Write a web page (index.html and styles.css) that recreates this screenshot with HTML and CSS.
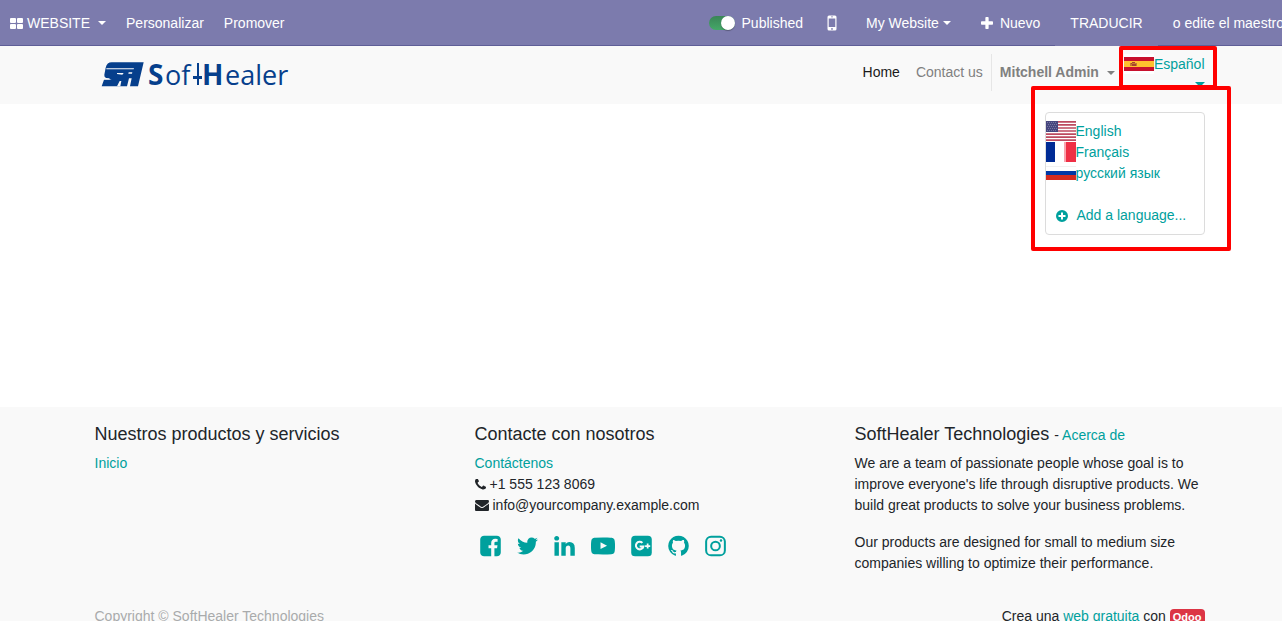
FILE: index.html
```html
<!DOCTYPE html>
<html lang="es">
<head>
<meta charset="utf-8">
<title>Home | SoftHealer Technologies</title>
<link rel="stylesheet" href="styles.css">
</head>
<body>
<div class="page">
  <header class="topbar">
    <nav class="topbar-group">
      <button class="topbar-item topbar-apps" type="button">
        <svg class="icon-grid" viewBox="0 0 13 11" aria-hidden="true"><rect width="6" height="5" rx="1"/><rect x="7" width="6" height="5" rx="1"/><rect y="6" width="6" height="5" rx="1"/><rect x="7" y="6" width="6" height="5" rx="1"/></svg>
        <span>WEBSITE</span><span class="caret caret-spaced"></span>
      </button>
      <a class="topbar-item topbar-menu" href="#">Personalizar</a>
      <a class="topbar-item topbar-menu" href="#">Promover</a>
    </nav>
    <div class="topbar-group topbar-right">
      <label class="topbar-item topbar-publish"><input class="switch" type="checkbox" checked><span>Published</span></label>
      <button class="topbar-item topbar-mobile" type="button" aria-label="Mobile preview">
        <svg class="icon-mobile" viewBox="0 0 10 16" aria-hidden="true"><path fill-rule="evenodd" d="M2 .5h6A1.5 1.5 0 0 1 9.500 2v12A1.500 1.500 0 0 1 8 15.500H2A1.500 1.500 0 0 1 .5 14V2A1.500 1.500 0 0 1 2 .5zM1.700 3.500v8.500h6.600V3.500zM4 1.600v.6h2v-.6zM5 13a.9.9 0 1 0 0 1.800.9.9 0 0 0 0-1.800z"/></svg>
      </button>
      <button class="topbar-item topbar-site" type="button"><span>My Website</span><span class="caret"></span></button>
      <button class="topbar-item topbar-new" type="button">
        <svg class="icon-plus" viewBox="192 128 1408 1408" aria-hidden="true"><path d="M1600 736v192q0 40-28 68t-68 28h-416v416q0 40-28 68t-68 28h-192q-40 0-68-28t-28-68v-416h-416q-40 0-68-28t-28-68v-192q0-40 28-68t68-28h416v-416q0-40 28-68t68-28h192q40 0 68 28t28 68v416h416q40 0 68 28t28 68z"/></svg>
        <span>Nuevo</span>
      </button>
      <button class="topbar-item topbar-translate" type="button">TRADUCIR</button>
      <a class="topbar-item" href="#">o edite el maestro</a>
    </div>
  </header>

  <div class="navbar">
    <div class="container navbar-inner">
      <a class="logo" href="#" aria-label="SoftHealer">
        <svg class="logo-image" viewBox="0 0 200 38" aria-hidden="true">
          <g transform="translate(0 1) scale(.33333)">
            <path d="M50 22H146L129 94H105L110 70H102L96 94H20L27 74H50L32 68Q27 65 28 59L32 38Q36 22 50 22z"/>
            <path class="logo-cut" d="M34 40H117L116 43H34zM66 54H86L82 59L66 57zM22 70H44L43 73H21zM74 78L79 78L76 94H66zM101 52H112L111 56H100z"/>
          </g>
          <text class="logo-bold" x="53" y="31">S</text>
          <text class="logo-light" x="70" y="31">of</text>
          <path d="M102 9h2v22h-2zM98 22h9v3h-9z"/>
          <text class="logo-bold" x="107" y="31">H</text>
          <text class="logo-light" x="130" y="31">ealer</text>
        </svg>
      </a>
      <nav class="nav-links">
        <a class="nav-link nav-active" href="#">Home</a>
        <a class="nav-link" href="#">Contact us</a>
        <button class="nav-link nav-user" type="button"><span>Mitchell Admin</span><span class="caret caret-spaced"></span></button>
        <div class="language">
          <button class="language-toggle" type="button">
            <span class="language-current"><svg class="flag" viewBox="0 0 30 20" aria-hidden="true"><path fill="#fff" d="M0 0h30v20H0z"/><path fill="#c8102e" d="M0 3h30v14H0z"/><path fill="#ffc02e" d="M0 7h30v6H0z"/><path fill="#c77a2e" d="M6 9h7v3H6z"/><path fill="#a5452c" d="M8 8h3v1H8zM7 9h1v1H7zM8 10h4v2H8z"/></svg><span>Español</span></span>
            <span class="caret"></span>
          </button>
          <div class="language-menu">
            <a href="#"><svg class="flag" viewBox="0 0 30 20" aria-hidden="true"><path fill="#fff" d="M0 0h30v20H0z"/><path stroke="#bd4a60" stroke-width="1.700" d="M0 .8h30M0 3.900h30M0 7h30M0 10h30M0 13.100h30M0 16.200h30M0 19.200h30"/><path fill="#46467f" d="M0 0h12v11H0z"/><path stroke="#77779f" stroke-dasharray="1 1" d="M1 1.500h10M2 3.500h10M1 5.500h10M2 7.500h10M1 9.500h10"/></svg><span>English</span></a>
            <a href="#"><svg class="flag" viewBox="0 0 30 20" aria-hidden="true"><path fill="#fff" d="M0 0h30v20H0z"/><path fill="#002b95" d="M0 0h9v20H0z"/><path fill="#f9a4ae" d="M18 0h2v20h-2z"/><path fill="#ef2f45" d="M20 0h10v20H20z"/></svg><span>Français</span></a>
            <a href="#"><svg class="flag" viewBox="0 0 30 20" aria-hidden="true"><path fill="#f1f1f1" d="M0 3h30v1H0z"/><path fill="#fff" d="M0 4h30v4H0z"/><path fill="#0039a6" d="M0 8h30v4H0z"/><path fill="#d52b1e" d="M0 12h30v5H0z"/></svg><span>русский язык</span></a>
            <a class="language-add" href="#"><svg class="icon-add" viewBox="0 0 12 12" aria-hidden="true"><path fill-rule="evenodd" d="M6 0a6 6 0 1 1 0 12A6 6 0 0 1 6 0zM5 2.500V5H2.500v2H5v2.500h2V7h2.500V5H7V2.500z"/></svg><span>Add a language...</span></a>
          </div>
          <div class="mark mark-toggle"></div>
          <div class="mark mark-menu"></div>
        </div>
      </nav>
    </div>
  </div>

  <main class="content"></main>

  <footer class="footer">
    <div class="container footer-columns">
      <section>
        <h4>Nuestros productos y servicios</h4>
        <a href="#">Inicio</a>
      </section>
      <section>
        <h4>Contacte con nosotros</h4>
        <ul class="contact">
          <li><a href="#">Contáctenos</a></li>
          <li><svg class="icon-phone" viewBox="192 192 1408 1408" aria-hidden="true"><path d="M1600 1240q0 27-10 70.500t-21 68.500q-21 50-122 106-94 51-186 51-27 0-52.500-3.500t-57.500-12.500-47.500-14.500-55.500-20.500-49-18q-98-35-175-83-128-79-264.500-215.500t-215.500-264.500q-48-77-83-175-3-9-18-49t-20.500-55.500-14.500-47.500-12.500-57.500-3.500-52.500q0-92 51-186 56-101 106-122 25-11 68.500-21t70.500-10q14 0 21 3 18 6 53 76 11 19 30 54t35 63.500 31 53.500q3 4 17.500 25t21.500 35.500 7 28.500q0 20-28.500 50t-62 55-62 53-28.500 46q0 9 5 22.500t8.500 20.500 14 24 11.500 19q76 137 174 235t235 174q2 1 19 11.500t24 14 20.500 8.500 22.500 5q18 0 46-28.500t53-62 55-62 50-28.500q14 0 28.500 7t35.500 21.500 25 17.500q25 15 53.500 31t63.500 35 54 30q70 35 76 53 3 7 3 21z"/></svg><span>+1 555 123 8069</span></li>
          <li><svg class="icon-envelope" viewBox="0 256 1792 1408" aria-hidden="true"><path d="M1792 710v794q0 66-47 113t-113 47h-1472q-66 0-113-47t-47-113v-794q44 49 101 87 362 246 497 345 57 42 92.500 65.500t94.500 48 110 24.500h2q51 0 110-24.500t94.500-48 92.500-65.500q170-123 498-345 57-39 100-87zm0-294q0 79-49 151t-122 123q-376 261-468 325-10 7-42.500 31t-54 38.500-52 32.500-57.500 27-50 9h-2q-23 0-50-9t-57.500-27-52-32.500-54-38.500-42.500-31q-91-64-262-182.500t-205-142.500q-62-42-117-115.500t-55-136.500q0-78 41.500-130t118.500-52h1472q65 0 112.500 47t47.500 113z"/></svg><span>info@yourcompany.example.com</span></li>
        </ul>
        <div class="social">
          <a href="#" aria-label="Facebook"><svg viewBox="128 0 1536 1792"><path d="M1376 128q119 0 203.500 84.500t84.500 203.500v960q0 119-84.500 203.500t-203.500 84.500h-188v-595h199l30-232h-229v-148q0-56 23.500-84t91.500-28l122-1v-207q-63-9-178-9-136 0-217.500 80t-81.500 226v171h-200v232h200v595h-532q-119 0-203.500-84.500t-84.500-203.500v-960q0-119 84.500-203.500t203.500-84.500h960z"/></svg></a>
          <a href="#" aria-label="Twitter"><svg viewBox="108 0 1576 1792"><path d="M1684 408q-67 98-162 167 1 14 1 42 0 130-38 259.500t-115.500 248.500-184.500 210.500-258 146-323 54.500q-271 0-496-145 35 4 78 4 225 0 401-138-105-2-188-64.500t-114-159.500q33 5 61 5 43 0 85-11-112-23-185.500-111.500t-73.500-205.500v-4q68 38 146 41-66-44-105-115t-39-154q0-88 44-163 121 149 294.500 238.500t371.500 99.500q-8-38-8-74 0-134 94.500-228.500t228.500-94.500q140 0 236 102 109-21 205-78-37 115-142 178 93-10 186-50z"/></svg></a>
          <a href="#" aria-label="LinkedIn"><svg viewBox="128 0 1536 1792"><path d="M477 625v991h-330v-991h330zm21-306q1 73-50.500 122t-135.500 49h-2q-82 0-132-49t-50-122q0-74 51.500-122.500t134.500-48.500 133 48.500 51 122.500zm1166 729v568h-329v-530q0-105-40.500-164.500t-126.500-59.500q-63 0-105.500 34.500t-63.500 85.500q-11 30-11 81v553h-329q2-399 2-647t-1-296l-1-48h329v144h-2q20-32 41-56t56.500-52 87-43.500 114.500-15.500q171 0 275 113.500t104 332.500z"/></svg></a>
          <a href="#" aria-label="YouTube"><svg class="social-wide" viewBox="0 0 1792 1792"><path d="M711 1128l484-250-484-253v503zm185-862q168 0 324.500 4.500t229.500 9.500l73 4q1 0 17 1.500t23 3 23.500 4.500 28.500 8 28 13 31 19.500 29 26.500q6 6 15.500 18.500t29 58.500 26.500 101q8 64 12.500 136.500t5.500 113.500v176q1 145-18 290-7 55-25 99.500t-32 61.500l-14 17q-14 15-29 26.500t-31 19-28 12.500-28.500 8-24 4.500-23 3-16.500 1.500q-251 19-627 19-207-2-359.500-6.500t-200.500-7.500l-49-4-36-4q-36-5-54.500-10t-51-21-56.500-41q-6-6-15.500-18.500t-29-58.500-26.500-101q-8-64-12.500-136.500t-5.500-113.500v-176q-1-145 18-290 7-55 25-99.500t32-61.500l14-17q14-15 29-26.500t31-19.500 28-13 28.500-8 23.500-4.500 23-3 17-1.500q251-18 627-18z"/></svg></a>
          <a href="#" aria-label="Google Plus"><svg viewBox="128 0 1536 1792"><rect x="128" y="128" width="1536" height="1536" rx="288"/><path fill="none" stroke="#f9f9f9" stroke-width="150" d="M965 660A285 285 0 1 0 1040 930H760"/><path fill="#f9f9f9" d="M1290 710h130v125h125v130h-125v125h-130V965h-125V835h125z"/></svg></a>
          <a href="#" aria-label="GitHub"><svg viewBox="128 0 1536 1792"><path d="M896 128q209 0 385.500 103t279.500 279.500 103 385.500q0 251-146.500 451.500t-378.500 277.500q-27 5-40-7t-13-30q0-3 .5-76.500t.5-134.500q0-97-52-142 57-6 102.500-18t94-39 81-66.500 53-105 20.500-150.500q0-119-79-206 37-91-8-204-28-9-81 11t-92 44l-38 24q-93-26-192-26t-192 26q-16-11-42.500-27t-83.500-38.500-85-13.500q-45 113-8 204-79 87-79 206 0 85 20.500 150t52.500 105 80.500 67 94 39 102.500 18q-39 36-49 103-21 10-45 15t-57 5-65.500-21.500-55.500-62.500q-19-32-48.500-52t-49.500-24l-20-3q-21 0-29 4.500t-5 11.500 9 14 13 12l7 5q22 10 43.500 38t31.500 51l10 23q13 38 44 61.500t67 30 69.500 7 55.500-3.500l23-4q0 38 .5 88.500t.5 54.500q0 18-13 30t-40 7q-232-77-378.500-277.500t-146.500-451.500q0-209 103-385.500t279.500-279.500 385.500-103z"/></svg></a>
          <a href="#" aria-label="Instagram"><svg viewBox="128 0 1536 1792"><rect x="197" y="197" width="1398" height="1398" rx="370" fill="none" stroke="currentColor" stroke-width="150"/><circle cx="896" cy="896" r="325" fill="none" stroke="currentColor" stroke-width="150"/><circle cx="1306" cy="486" r="92"/></svg></a>
        </div>
      </section>
      <section>
        <h4>SoftHealer Technologies <small>- <a href="#">Acerca de</a></small></h4>
        <p>We are a team of passionate people whose goal is to improve everyone's life through disruptive products. We build great products to solve your business problems.</p>
        <p>Our products are designed for small to medium size companies willing to optimize their performance.</p>
      </section>
    </div>
    <div class="container footer-bottom">
      <span class="copyright">Copyright © SoftHealer Technologies</span>
      <span>Crea una <a href="#">web gratuita</a> con <a class="badge" href="#">Odoo</a></span>
    </div>
  </footer>
</div>
</body>
</html>
```
FILE: styles.css
```css
* { box-sizing: border-box; }

body {
  margin: 0;
  overflow: hidden;
  background: #fff;
  color: #212529;
  font: 14px/21px "Liberation Sans", Arial, sans-serif;
}

.page { width: calc(100% + 17px); }

a { color: #00a09d; text-decoration: none; }
button { margin: 0; padding: 0; border: 0; background: none; color: inherit; font: inherit; cursor: pointer; }
svg { display: block; flex: none; fill: currentColor; }

.container {
  width: 100%;
  max-width: 1140px;
  margin: 0 auto;
  padding: 0 15px;
}

.caret {
  flex: none;
  width: 8px;
  border: 4px solid transparent;
  border-top-color: currentColor;
  border-bottom: 0;
}
.caret-spaced { margin-left: 8px; }

/* Editor bar */
.topbar {
  display: flex;
  justify-content: space-between;
  height: 46px;
  background: #7c7bad;
  box-shadow: inset 0 -1px #5f5e97;
  color: #fff;
}
.topbar-group { display: flex; }
.topbar-item {
  display: flex;
  align-items: center;
  padding: 0 15px;
  color: #fff;
  white-space: nowrap;
}
.topbar-apps { padding: 0 10px; }
.topbar-menu { padding: 0 10px; }
.topbar-mobile { padding: 0 14px 0 9px; }
.topbar-site { gap: 4px; }
.topbar-translate { background: #7c7bad; }
.icon-grid { width: 13px; height: 11px; margin-right: 4px; }
.icon-mobile { width: 10px; height: 16px; }
.icon-plus { width: 12px; height: 12px; margin-right: 7px; }

.switch {
  appearance: none;
  display: flex;
  justify-content: flex-end;
  width: 26px;
  height: 14px;
  margin: 0 7px 0 0;
  border-radius: 7px;
  background: linear-gradient(#3a8557, #45a868);
}
.switch::before {
  content: "";
  width: 14px;
  height: 14px;
  border-radius: 50%;
  background: #fff;
  box-shadow: 0 1px 1px rgba(0, 0, 0, .3);
}

/* Site navigation */
.navbar { background: #f9f9f9; }
.navbar-inner {
  display: flex;
  justify-content: space-between;
  padding-top: 8px;
  padding-bottom: 8px;
}
.logo { display: block; color: #063f8c; }
.logo-image { width: 200px; height: 38px; }
.logo-cut { fill: #f9f9f9; }
.logo-bold { font: 700 28px "Open Sans", sans-serif; }
.logo-light { font: 400 27px "Open Sans", sans-serif; }

.nav-links { display: flex; align-items: flex-start; }
.nav-link { display: flex; align-items: center; padding: 8px; color: #808080; }
.nav-active { color: #1a1a1a; }
.nav-user { border-left: 1px solid #e6e6e6; font-weight: 700; }

.language { position: relative; padding-left: 1px; }
.language-toggle {
  display: flex;
  flex-direction: column;
  align-items: flex-end;
  height: 42px;
  color: #00a09d;
}
.language-toggle .caret { margin: 7px 0 0; width: 10px; border-width: 5px 5px 0; }
.language-current { display: flex; }
.flag { width: 30px; height: 20px; }

.language-menu {
  position: absolute;
  top: 58px;
  right: 0;
  width: 160px;
  padding: 8px 0;
  border: 1px solid #dcdcdc;
  border-radius: 4px;
  background: #fff;
}
.language-menu a { display: flex; white-space: nowrap; }
.language-menu .language-add { align-items: center; gap: 9px; margin-top: 21px; padding-left: 10px; }
.icon-add { width: 12px; height: 12px; }

.mark { position: absolute; border: 4px solid #f00; border-radius: 2px; pointer-events: none; }
.mark-toggle { top: -8px; right: -12px; width: 98px; height: 43px; }
.mark-menu { top: 32px; right: -26px; width: 200px; height: 165px; }

.content { min-height: 303px; }

/* Footer */
.footer { background: #f9f9f9; }
.footer-columns {
  display: grid;
  grid-template-columns: repeat(3, 1fr);
  gap: 30px;
  padding-top: 16px;
}
h4 { margin: 0 0 8px; font-size: 18px; font-weight: 400; line-height: 22px; }
h4 small { font-size: 14px; line-height: 14px; }
p { margin: 0 0 16px; }
.contact { margin: 0; padding: 0; list-style: none; }
.contact li { display: flex; align-items: center; gap: 4px; }
.icon-phone { width: 11px; height: 11px; }
.icon-envelope { width: 14px; height: 11px; }
.social { display: flex; gap: 16px; padding: 18px 0 0 5px; }
.social a { display: block; }
.social svg { width: 21px; height: 24px; }
.social .social-wide { width: 24px; }

.footer-bottom {
  display: flex;
  justify-content: space-between;
  padding-top: 16px;
  padding-bottom: 16px;
}
.copyright { color: #a9abac; }
.badge {
  display: inline-block;
  padding: 3px;
  border-radius: 4px;
  background: #dc3545;
  color: #fff;
  font-size: 11px;
  font-weight: 700;
  line-height: 11px;
}
```
